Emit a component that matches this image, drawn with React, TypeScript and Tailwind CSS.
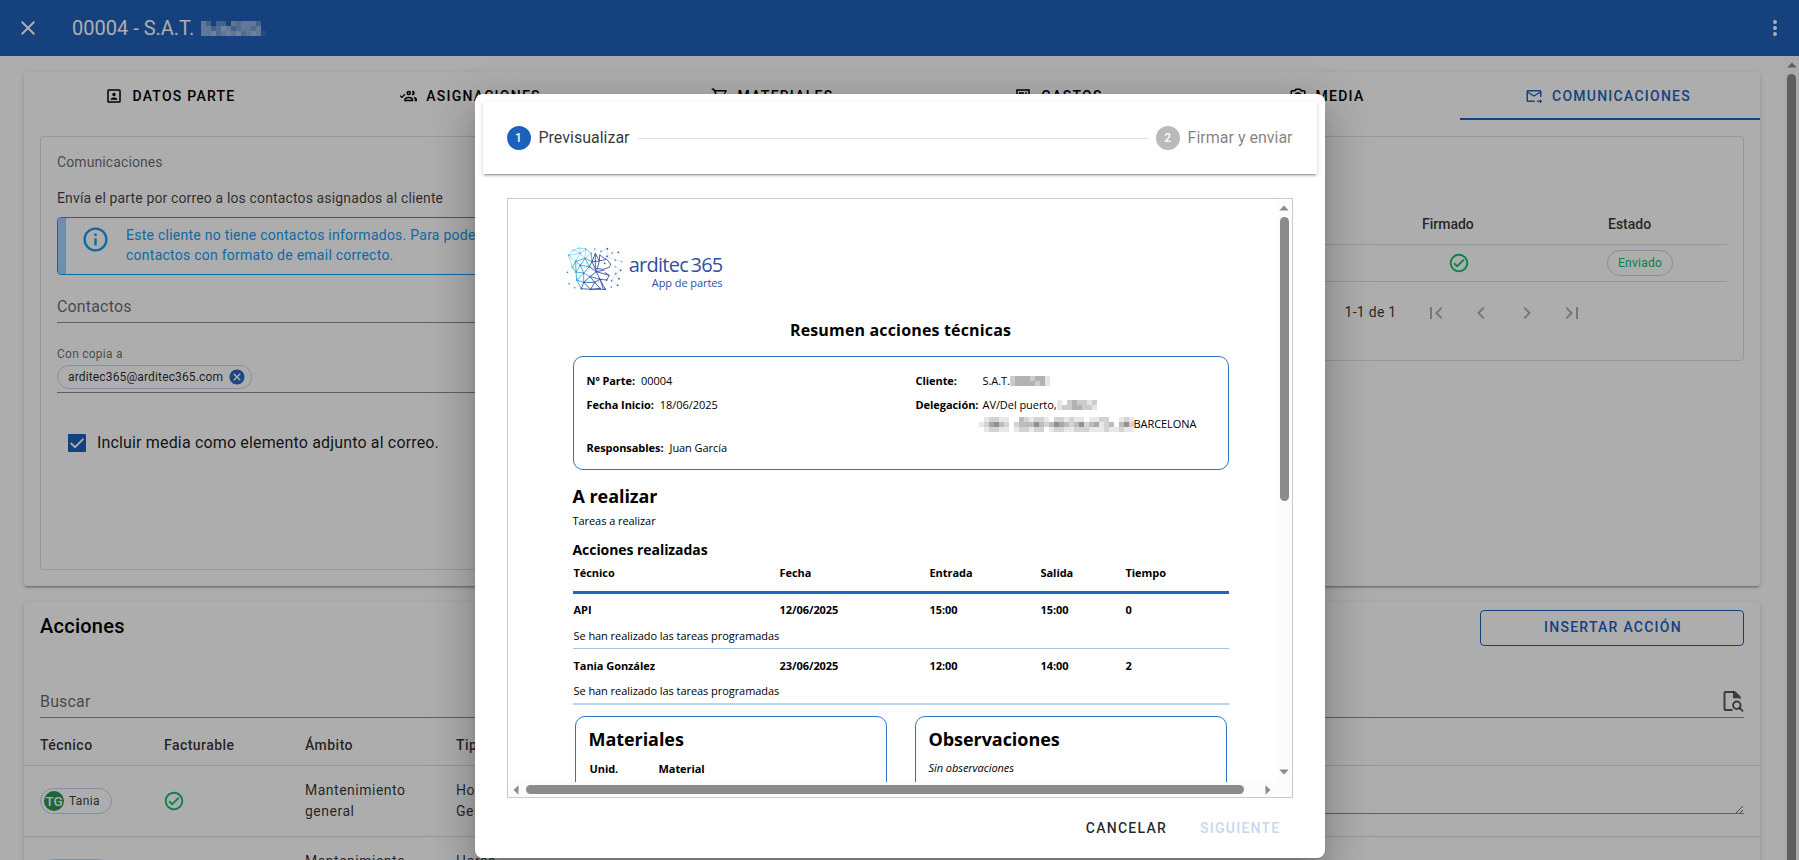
import React from 'react';

const P = {
  close: 'M19,6.41L17.59,5L12,10.59L6.41,5L5,6.41L10.59,12L5,17.59L6.41,19L12,13.41L17.59,19L19,17.59L13.41,12L19,6.41Z',
  dots: 'M12,16A2,2 0 0,1 14,18A2,2 0 0,1 12,20A2,2 0 0,1 10,18A2,2 0 0,1 12,16M12,10A2,2 0 0,1 14,12A2,2 0 0,1 12,14A2,2 0 0,1 10,12A2,2 0 0,1 12,10M12,4A2,2 0 0,1 14,6A2,2 0 0,1 12,8A2,2 0 0,1 10,6A2,2 0 0,1 12,4Z',
  accountBox:
    'M19,19H5V5H19M19,3H5A2,2 0 0,0 3,5V19A2,2 0 0,0 5,21H19A2,2 0 0,0 21,19V5A2,2 0 0,0 19,3M16.5,16.25C16.5,14.75 13.5,14 12,14C10.5,14 7.5,14.75 7.5,16.25V17H16.5M12,12.25A2.25,2.25 0 0,0 14.25,10A2.25,2.25 0 0,0 12,7.75A2.25,2.25 0 0,0 9.75,10A2.25,2.25 0 0,0 12,12.25Z',
  accounts:
    'M13 11A3 3 0 1 0 10 8A3 3 0 0 0 13 11M13 7A1 1 0 1 1 12 8A1 1 0 0 1 13 7M17.11 10.86A5 5 0 0 0 17.11 5.14A2.91 2.91 0 0 1 18 5A3 3 0 0 1 18 11A2.91 2.91 0 0 1 17.11 10.86M13 13C7 13 7 17 7 17V19H19V17S19 13 13 13M9 17C9 16.71 9.32 15 13 15C16.5 15 16.94 16.56 17 17M24 17V19H21V17A5.6 5.6 0 0 0 19.2 13.06C24 13.55 24 17 24 17M7.34 8.92L8.5 10.33L3.75 15.08L1 12.08L2.16 10.92L3.75 12.5L7.34 8.92Z',
  cart: 'M17,18A2,2 0 0,1 19,20A2,2 0 0,1 17,22A2,2 0 0,1 17,18M1,2H4.27L5.21,4H20A1,1 0 0,1 21,5C21,5.17 20.95,5.34 20.88,5.5L17.3,11.97C16.96,12.58 16.3,13 15.55,13H8.1L7.2,14.63L7.17,14.75A0.25,0.25 0 0,0 7.42,15H19V17H7C5.89,17 5,16.1 5,15C5,14.65 5.09,14.32 5.24,14.04L6.6,11.59L3,4H1V2M7,18A2,2 0 0,1 9,20A2,2 0 0,1 7,22A2,2 0 0,1 7,18M16,11L18.78,6H6.14L8.5,11H16Z',
  receipt:
    'M3,3H21V21H3V3M5,5V19H19V5H5M6.5,7H13V13H11V9H8.5V13H6.5V7M15,7H17V13H15V7M7,15H17V17H7V15Z',
  camera:
    'M20,4H16.83L15,2H9L7.17,4H4A2,2 0 0,0 2,6V18A2,2 0 0,0 4,20H20A2,2 0 0,0 22,18V6A2,2 0 0,0 20,4M20,18H4V6H8.05L9.88,4H14.12L15.95,6H20V18M12,7A5,5 0 0,0 7,12A5,5 0 0,0 12,17A5,5 0 0,0 17,12A5,5 0 0,0 12,7M12,15A3,3 0 0,1 9,12A3,3 0 0,1 12,9A3,3 0 0,1 15,12A3,3 0 0,1 12,15Z',
  email:
    'M13 19C13 18.66 13.04 18.33 13.09 18H4V8L12 13L20 8V13.09C20.72 13.21 21.39 13.46 22 13.81V6C22 4.9 21.1 4 20 4H4C2.9 4 2 4.9 2 6V18C2 19.1 2.9 20 4 20H13.09C13.04 19.67 13 19.34 13 19M20 6L12 11L4 6H20M20 22V20H16V18H20V16L23 19L20 22Z',
  info: 'M11,9H13V7H11M12,20C7.59,20 4,16.41 4,12C4,7.59 7.59,4 12,4C16.41,4 20,7.59 20,12C20,16.41 16.41,20 12,20M12,2A10,10 0 0,0 2,12A10,10 0 0,0 12,22A10,10 0 0,0 22,12A10,10 0 0,0 12,2M11,17H13V11H11V17Z',
  check:
    'M12 2C6.5 2 2 6.5 2 12S6.5 22 12 22 22 17.5 22 12 17.5 2 12 2M12 20C7.59 20 4 16.41 4 12S7.59 4 12 4 20 7.59 20 12 16.41 20 12 20M16.59 7.58L10 14.17L7.41 11.59L6 13L10 17L18 9L16.59 7.58Z',
  closeCircle:
    'M12,2C17.53,2 22,6.47 22,12C22,17.53 17.53,22 12,22C6.47,22 2,17.53 2,12C2,6.47 6.47,2 12,2M15.59,7L12,10.59L8.41,7L7,8.41L10.59,12L7,15.59L8.41,17L12,13.41L15.59,17L17,15.59L13.41,12L17,8.41L15.59,7Z',
  first: 'M18.41,16.59L13.82,12L18.41,7.41L17,6L11,12L17,18L18.41,16.59M6,6H8V18H6V6Z',
  prev: 'M15.41,16.58L10.83,12L15.41,7.41L14,6L8,12L14,18L15.41,16.58Z',
  next: 'M8.59,16.58L13.17,12L8.59,7.41L10,6L16,12L10,18L8.59,16.58Z',
  last: 'M5.59,7.41L10.18,12L5.59,16.59L7,18L13,12L7,6L5.59,7.41M16,6H18V18H16V6Z',
};

function Icon({ d, className }: { d: string; className: string }) {
  return (
    <svg viewBox="0 0 24 24" className={`shrink-0 ${className}`} fill="currentColor">
      <path d={d} />
    </svg>
  );
}

/** Pixelated strip that hides private data. Each digit is the darkness of one block. */
function Mosaic({ rows, size, color, className }: { rows: string[]; size: number; color: string; className?: string }) {
  const w = rows[0].length * size;
  const h = rows.length * size;
  return (
    <svg width={w} height={h} viewBox={`0 0 ${w} ${h}`} shapeRendering="crispEdges" className={`shrink-0 ${className ?? ''}`}>
      {rows.map((r, y) =>
        r.split('').map((c, x) => (
          <rect key={`${x}-${y}`} x={x * size} y={y * size} width={size} height={size} fill={color} opacity={Number(c) / 10} />
        )),
      )}
    </svg>
  );
}

const tabs: [string, string, string][] = [
  ['DATOS PARTE', P.accountBox, 'w-[293px] text-black'],
  ['ASIGNACIONES', P.accounts, 'w-[306px] text-black'],
  ['MATERIALES', P.cart, 'w-[298px] text-black'],
  ['GASTOS', P.receipt, 'w-[278px] pr-[3px] text-black'],
  ['MEDIA', P.camera, 'w-[261px] pr-[6px] text-black'],
  ['COMUNICACIONES', P.email, 'w-[300px] text-[#2563b8] border-b-2 border-[#1c61bc] pt-[2px] pr-[4px]'],
];

const card = 'rounded bg-white shadow-[0_3px_1px_-2px_rgba(0,0,0,0.2),0_2px_2px_0_rgba(0,0,0,0.14),0_1px_5px_0_rgba(0,0,0,0.12)]';

function Chip({ children, className }: { children: React.ReactNode; className: string }) {
  return <div className={`flex items-center rounded-full border border-[#c3d5ea] text-[12px] ${className}`}>{children}</div>;
}

function Communications() {
  return (
    <section className={`h-[514px] shrink-0 ${card}`}>
      <nav className="flex h-12">
        {tabs.map(([t, d, c]) => (
          <div key={t} className={`flex shrink-0 items-center justify-center text-sm font-medium tracking-[0.0893em] ${c}`}>
            <Icon d={d} className="mr-[9px] size-[18px]" />
            {t}
          </div>
        ))}
      </nav>
      <div className="flex items-start gap-4 px-4 pt-4">
        <div className="h-[434px] w-[744px] rounded border border-[#e0e0e0] px-4">
          <div className="mt-[13px] h-6 text-sm leading-6 tracking-[0.0071em] text-black/60">Comunicaciones</div>
          <div className="mt-3 h-6 text-sm leading-6 tracking-[0.0098em] text-black/75">Envía el parte por correo a los contactos asignados al cliente</div>
          <div className="mt-[7px] flex h-[58px] overflow-hidden rounded border border-[#149cf5]">
            <div className="w-2 shrink-0 bg-[#a2d2fa]" />
            <Icon d={P.info} className="mt-[7px] ml-[15px] size-[29px] text-[#149cf5]" />
            <div className="mt-[7px] ml-[16px] w-[480px] text-sm leading-5 tracking-[0.0179em] text-[#149cf5]">
              Este cliente no tiene contactos informados. Para poder enviar, añada
              <br />
              contactos con formato de email correcto.
            </div>
          </div>
          <div className="mt-[18px] h-[30px] border-b border-black/45 text-base leading-[28px] tracking-[0.01em] text-black/60">Contactos</div>
          <div className="mt-[21px] h-5 text-[12px] leading-5 tracking-[0.02em] text-black/60">Con copia a</div>
          <div className="mt-px h-[28px] border-b border-black/45">
            <Chip className="h-6 w-[195px] pl-[10px] tracking-[0.012em] text-black/85">
              arditec365@arditec365.com
              <Icon d={P.closeCircle} className="ml-[5px] size-[18px] text-[#2b69b9]" />
            </Chip>
          </div>
          <div className="mt-[37px] ml-[11px] flex h-6 items-center">
            <svg viewBox="0 0 18 18" className="mt-[2px] size-[18px]">
              <rect width="18" height="18" rx="1" fill="#1c61bc" />
              <path d="M2.7 9L7 13.2L15.4 4.8" fill="none" stroke="#fff" strokeWidth="1.9" />
            </svg>
            <span className="mt-[2px] ml-[11px] text-base tracking-[0.01em] text-black/90">Incluir media como elemento adjunto al correo.</span>
          </div>
        </div>
        <div className="h-[225px] flex-1 rounded border border-[#e0e0e0] pr-4">
          <div className="mt-[67px] ml-[500px] flex h-[41px] items-center border-b border-[#dcdcdc] pl-[121px] text-sm font-medium text-black/80">
            <span className="w-[186px]">Firmado</span>
            <span>Estado</span>
          </div>
          <div className="ml-[500px] flex h-[37px] items-center border-b border-[#dcdcdc] pl-[147px]">
            <Icon d={P.check} className="size-[22px] text-[#10be68]" />
            <Chip className="ml-[137px] h-[26px] w-[66px] justify-center tracking-[0.02em] text-[#10be68]">Enviado</Chip>
          </div>
          <div className="mt-[18px] flex h-6 justify-end pr-[143px] text-black/80">
            <span className="mr-[27px] text-sm leading-6 tracking-[0.02em]">1-1 de 1</span>
            <div className="flex gap-[21.5px] pt-[1px] text-black/30">
              <Icon d={P.first} className="size-6" />
              <Icon d={P.prev} className="size-6" />
              <Icon d={P.next} className="size-6" />
              <Icon d={P.last} className="size-6" />
            </div>
          </div>
        </div>
      </div>
    </section>
  );
}

function ActionRow({ initials, name, note }: { initials: string; name: string; note: boolean }) {
  return (
    <div className="flex h-[71px] shrink-0 border-b border-[#dcdcdc] px-4 text-sm leading-[21px] tracking-[0.036em] text-black/80">
      <div className="w-[124px] pt-[22px]">
        <Chip className="h-[26px] w-[72px] pl-[3px] tracking-[0.03em]">
          <span className="mr-[5px] flex size-5 items-center justify-center rounded-full bg-[#2b9453] text-[13.5px] font-medium tracking-normal text-white">{initials}</span>
          {name}
        </Chip>
      </div>
      <div className="w-[141px] pt-[24px]">
        <Icon d={P.check} className="-ml-px size-[22px] text-[#10be68]" />
      </div>
      <div className="w-[151px] pt-[14px]">
        Mantenimiento
        <br />
        general
      </div>
      <div className="w-[120px] pt-[14px]">
        Horas
        <br />
        Generales
      </div>
      {note && (
        <div className="mb-[22px] flex flex-1 items-end justify-end border-b border-black/45">
          <svg viewBox="0 0 8 8" className="size-2" stroke="#555" strokeWidth="0.9">
            <path d="M0 8L7 1M4 8L7 5" />
          </svg>
        </div>
      )}
    </div>
  );
}

function Actions() {
  return (
    <section className={`flex h-[400px] shrink-0 flex-col ${card}`}>
      <div className="flex h-[60px] shrink-0 justify-between px-4 pt-2">
        <h2 className="h-8 text-xl leading-8 font-medium tracking-[0.0125em] text-black">Acciones</h2>
        <button className="h-9 w-[264px] rounded border border-[#1c61bc] pb-[2px] pl-[2px] text-sm font-medium tracking-[0.0893em] text-[#1c61bc]">INSERTAR ACCIÓN</button>
      </div>
      <div className="mx-4 mt-[24px] flex h-[32px] shrink-0 justify-between border-b border-black/45">
        <span className="text-base leading-[32px] tracking-[0.01em] text-black/60">Buscar</span>
        <svg viewBox="0 0 24 24" className="mt-[3px] -mr-px size-6 text-black/65" fill="none" stroke="currentColor" strokeWidth="2">
          <path d="M11.5 21H4.5a1 1 0 0 1-1-1V4a1 1 0 0 1 1-1H13" />
          <path d="M12 2.2H14.3L19.6 7.5V10.6L18 9.2H12Z" fill="currentColor" stroke="none" />
          <circle cx="15.8" cy="16.2" r="3.7" />
          <path d="M18.4 18.8L22 22.4" />
        </svg>
      </div>
      <div className="mt-[6px] flex h-[42px] shrink-0 items-center border-b border-[#dcdcdc] px-4 text-sm font-medium tracking-[0.033em] text-black/80">
        <span className="w-[124px]">Técnico</span>
        <span className="w-[141px]">Facturable</span>
        <span className="w-[151px]">Ámbito</span>
        <span>Tipo</span>
      </div>
      <ActionRow initials="TG" name="Tania" note />
      <ActionRow initials="" name="" note={false} />
    </section>
  );
}

const nodes: [number, number, string][] = [
  [296, 526, '#35b5e0'], [309, 510, '#7fd3ee'], [327, 504, '#7fd3ee'], [347, 507, '#35b5e0'], [331, 520, '#35b5e0'], [317, 544, '#1a9fd4'],
  [307, 562, '#35b5e0'], [345, 535, '#1a9fd4'], [364, 520, '#35b5e0'], [331, 556, '#1a87c4'], [358, 560, '#1a6fb4'], [292, 577, '#1a9fd4'],
  [318, 576, '#1a9fd4'], [341, 579, '#0f78bd'], [297, 611, '#35b5e0'], [320, 600, '#1a9fd4'], [341, 607, '#1a6fb4'], [314, 623, '#35b5e0'],
  [334, 626, '#1a6fb4'], [362, 628, '#2f4f9f'], [374, 607, '#2f4f9f'], [360, 590, '#1a6fb4'], [379, 575, '#2f4f9f'], [390, 598, '#2f4f9f'],
  [406, 628, '#2f4f9f'], [390, 625, '#2f4f9f'], [366, 545, '#1a6fb4'], [374, 507, '#35b5e0'], [393, 514, '#6a78b8'], [412, 506, '#2f4f9f'],
  [411, 529, '#2f4f9f'], [427, 519, '#6a78b8'], [445, 517, '#2f4f9f'], [436, 540, '#6a78b8'], [455, 545, '#9aa5d2'], [436, 560, '#9aa5d2'],
  [452, 571, '#2f4f9f'], [437, 581, '#6a78b8'], [425, 602, '#6a78b8'], [447, 596, '#2f4f9f'], [443, 616, '#2f4f9f'], [424, 621, '#6a78b8'],
  [404, 550, '#2f4f9f'], [410, 600, '#2f4f9f'],
];

function Logo() {
  return (
    <div className="flex">
      <svg viewBox="288 498 174 138" className="h-[46px] w-[58px]" fill="none" strokeWidth="2.8">
        <path stroke="#8adcf2" d="M296 526L309 510L327 504L347 507L364 520L345 535L331 520L309 510M331 520L347 507M331 520L296 526L317 544L331 520M364 520L347 507L345 535M327 504L331 520M296 526L307 562" />
        <path stroke="#3fa9d8" d="M317 544L345 535L331 556L317 544L307 562L318 576L331 556L358 560L345 535L366 545L364 520M318 576L341 579L331 556M318 576L320 600L341 579L358 560M320 600L341 607L341 579L360 590M317 544L318 576M320 600L334 626" />
        <path stroke="#3b5aa8" d="M341 607L334 626L362 628L341 607L360 590L374 607L362 628L406 628L390 598L374 607L390 625L362 628M360 590L379 575L358 560L366 545L379 575L390 598L360 590M341 607H374M366 545L376 520L376 565L400 568L418 562L422 552L410 538L398 532L389 524L388 543L366 545M388 543L410 538M376 520L388 543L379 575L404 570M379 575L418 586L404 577M390 598L410 600L418 586M390 598L400 628" />
        <path stroke="#b9c2e0" strokeWidth="1.5" d="M393 514L412 506L411 529L427 519M411 529L436 540L455 545M436 560L452 571L437 581L425 602L443 616M437 581L447 596" />
        {nodes.map(([x, y, c]) => (
          <circle key={`${x}-${y}`} cx={x} cy={y} r="2.6" fill={c} />
        ))}
      </svg>
      <div className="flex w-[99px] flex-col items-end font-['Open_Sans',sans-serif] text-[#2f4f9f]">
        <span className="mt-[6px] h-[25px] text-[20px] leading-[25px] tracking-[-0.75px] whitespace-nowrap [word-spacing:-2px]">arditec 365</span>
        <span className="-mt-px h-[14px] text-[11px] leading-[14px] tracking-[-0.08px] whitespace-nowrap">App de partes</span>
      </div>
    </div>
  );
}

function ReportRow({ cells, className }: { cells: string[]; className: string }) {
  return (
    <div className={`flex pl-px font-bold ${className}`}>
      <span className="w-[206px]">{cells[0]}</span>
      <span className="w-[150px]">{cells[1]}</span>
      <span className="w-[111px]">{cells[2]}</span>
      <span className="w-[85px]">{cells[3]}</span>
      <span>{cells[4]}</span>
    </div>
  );
}

function Report() {
  return (
    <div className="h-[583px] w-[769px] overflow-hidden pl-[65px] font-['Open_Sans','Noto_Sans',sans-serif] text-[11px] leading-4 tracking-[-0.06px] text-black">
      <div className="-ml-[7px] pt-[47px]">
        <Logo />
      </div>
      <h1 className="mt-[26px] h-6 w-[656px] text-center text-base leading-6 font-bold tracking-[0.16px]">Resumen acciones técnicas</h1>
      <div className="mt-[14px] flex h-[114px] w-[656px] rounded-[10px] border border-[#2e75c6] pl-[13px]">
        <div className="w-[329px] pt-[16px]">
          <div><b className="mr-[6px]">Nº Parte:</b>00004</div>
          <div className="mt-[8px]"><b className="mr-[6px]">Fecha Inicio:</b>18/06/2025</div>
          <div className="mt-[27px]"><b className="mr-[6px]">Responsables:</b>Juan García</div>
        </div>
        <div className="pt-[16px]">
          <div className="flex items-center">
            <b className="w-[67px]">Cliente:</b>S.A.T.
            <Mosaic rows={['23332331', '23333231']} size={5} color="#000" className="-my-1" />
          </div>
          <div className="mt-[8px] flex items-center">
            <b className="w-[67px]">Delegación:</b>AV/Del puerto,
            <Mosaic rows={['10232212', '12233221']} size={5} color="#000" className="-my-1" />
          </div>
          <div className="mt-[3px] flex items-center pl-[63px]">
            <Mosaic rows={['012211003212210221211011220', '124532023335323543235234123', '012211012212201221122211121']} size={5} color="#222" className="-my-1" />
            <Mosaic rows={['0121', '0352', '1211']} size={5} color="#222" className="-my-1" />
            <span>BARCELONA</span>
          </div>
        </div>
      </div>
      <h2 className="mt-[14px] h-6 text-[18px] leading-6 font-bold">A realizar</h2>
      <div className="mt-[5px]">Tareas a realizar</div>
      <h3 className="mt-[11px] h-5 text-[14px] leading-5 font-bold">Acciones realizadas</h3>
      <ReportRow className="mt-[5px] h-[29px] w-[656px] border-b-[3px] border-[#1f66bf]" cells={['Técnico', 'Fecha', 'Entrada', 'Salida', 'Tiempo']} />
      <ReportRow className="mt-[8px]" cells={['API', '12/06/2025', '15:00', '15:00', '0']} />
      <div className="mt-[10px] h-[21px] w-[656px] border-b border-[#a3c4e8] pl-px">Se han realizado las tareas programadas</div>
      <ReportRow className="mt-[9px]" cells={['Tania González', '23/06/2025', '12:00', '14:00', '2']} />
      <div className="mt-[9px] h-[22px] w-[656px] border-b-2 border-[#bcd4ee] pl-px">Se han realizado las tareas programadas</div>
      <div className="mt-[11px] ml-[2px] flex gap-[28px]">
        <div className="h-[120px] w-[312px] rounded-[10px] border border-[#2e75c6] px-[13px] pt-[10px]">
          <h2 className="h-6 text-[18px] leading-6 font-bold">Materiales</h2>
          <div className="mt-[10px] pl-px font-bold"><span className="inline-block w-[69px]">Unid.</span>Material</div>
        </div>
        <div className="h-[120px] w-[312px] rounded-[10px] border border-[#2e75c6] px-[13px] pt-[10px]">
          <h2 className="h-6 text-[18px] leading-6 font-bold">Observaciones</h2>
          <div className="mt-[9px] italic">Sin observaciones</div>
        </div>
      </div>
    </div>
  );
}

function Arrow({ d, className }: { d: string; className: string }) {
  return (
    <svg viewBox="0 0 10 10" className={`size-[10px] shrink-0 ${className}`} fill="#8b8b8b">
      <path d={d} />
    </svg>
  );
}

function Dialog() {
  return (
    <div className="flex h-[764px] w-[850px] flex-col rounded-lg bg-white px-2 pt-2 shadow-[0_11px_15px_-7px_rgba(0,0,0,0.2),0_24px_38px_3px_rgba(0,0,0,0.14),0_9px_46px_8px_rgba(0,0,0,0.12)]">
      <div className="flex h-[72px] shrink-0 items-center bg-white px-6 shadow-[0_3px_1px_-2px_rgba(0,0,0,0.2),0_2px_2px_0_rgba(0,0,0,0.14),0_1px_5px_0_rgba(0,0,0,0.12)]">
        <span className="flex size-6 items-center justify-center rounded-full bg-[#1c62bd] text-[12px] font-medium text-white">1</span>
        <span className="ml-2 text-base text-black/80">Previsualizar</span>
        <span className="mx-2 mt-px h-px flex-1 bg-[#e0e0e0]" />
        <span className="flex size-6 items-center justify-center rounded-full bg-[#bababa] text-[12px] font-medium text-white">2</span>
        <span className="ml-2 text-base text-black/50">Firmar y enviar</span>
      </div>
      <div className="mx-6 mt-6 h-[600px] shrink-0 border border-[#cacaca]">
        <div className="flex h-[583px]">
          <Report />
          <div className="flex w-[15px] flex-col items-center bg-[#fcfcfc]">
            <Arrow className="mt-[4px]" d="M0.3 7.5L5 2.5L9.7 7.5Z" />
            <div className="mt-[4px] h-[284px] w-[9px] rounded-full bg-[#8b8b8b]" />
            <Arrow className="mt-auto mb-[5px]" d="M0.3 2.5L5 7.5L9.7 2.5Z" />
          </div>
        </div>
        <div className="flex h-[15px] items-center bg-[#fcfcfc]">
          <Arrow className="ml-[3px]" d="M7.5 0.3L2.5 5L7.5 9.7Z" />
          <div className="ml-[5px] h-[9px] w-[718px] rounded-full bg-[#8b8b8b]" />
          <Arrow className="ml-[19px]" d="M2.5 0.3L7.5 5L2.5 9.7Z" />
        </div>
      </div>
      <div className="mt-[20px] flex h-5 justify-end pr-[36px] text-sm leading-5 font-medium tracking-[0.0893em]">
        <span className="mr-[33px] text-black/85">CANCELAR</span>
        <span className="text-[#c6d8ef]">SIGUIENTE</span>
      </div>
    </div>
  );
}

export default function App() {
  return (
    <div className="relative flex h-[860px] w-[1799px] flex-col overflow-hidden bg-white font-['Roboto',sans-serif]">
      <header className="flex h-14 shrink-0 items-center bg-[#1f61bb] pr-[12px] pl-4 text-white">
        <Icon d={P.close} className="size-6" />
        <span className="ml-[32px] w-[129px] text-xl whitespace-nowrap">00004 - S.A.T.</span>
        <Mosaic rows={['5303305455530', '5534653455450', '5564565645651']} size={5} color="#fff" />
        <Icon d={P.dots} className="ml-auto size-6" />
      </header>
      <div className="flex h-[804px]">
        <main className="flex w-[1784px] flex-col gap-4 overflow-hidden pt-4 pr-6 pl-6">
          <Communications />
          <Actions />
        </main>
        <div className="flex w-[15px] flex-col items-center bg-[#fcfcfc]">
          <Arrow className="mt-[4px]" d="M0.3 7.5L5 2.5L9.7 7.5Z" />
          <div className="mt-[4px] h-[900px] w-[9px] shrink-0 rounded-full bg-[#8b8b8b]" />
        </div>
      </div>
      <div className="absolute inset-0 flex items-start justify-center bg-black/32 pt-[94px]">
        <Dialog />
      </div>
    </div>
  );
}
